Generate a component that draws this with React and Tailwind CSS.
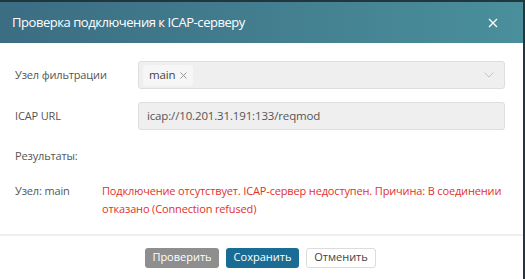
import React from 'react';

function App() {
  return (
    <div className="w-[525px] h-[279px] bg-[#22363d] pt-[2px] pr-[2px] overflow-hidden" style={{ fontFamily: '"Open Sans", sans-serif' }}>
      <div className="h-full bg-white flex flex-col">
        <div className="h-[41px] flex items-center justify-between pl-3 pr-[25px] bg-gradient-to-r from-[#3b6d83] to-[#4a8f9b]">
          <span className="text-white text-[13px] tracking-[-0.45px]">Проверка подключения к ICAP-серверу</span>
          <svg width="10" height="10" viewBox="0 0 10 10" className="text-white">
            <path d="M1 1L9 9M9 1L1 9" stroke="currentColor" strokeWidth="1.3" />
          </svg>
        </div>

        <div className="flex-1 px-[15px] pt-[18px] text-[11px] tracking-[-0.15px] text-[#555]">
          <div className="flex items-center">
            <div className="w-[123px]">Узел фильтрации</div>
            <div className="flex-1 h-[28px] mr-[3px] bg-[#efefef] border border-[#dedede] rounded-[3px] flex items-center justify-between pl-[4px] pr-[10px]">
              <div className="h-[21px] px-[6px] bg-[#f6f6f6] rounded-[3px] flex items-center gap-[5px] text-[#444] text-[11.5px]">
                main
                <svg width="7" height="7" viewBox="0 0 7 7">
                  <path d="M0.5 0.5L6.5 6.5M6.5 0.5L0.5 6.5" stroke="#9a9a9a" strokeWidth="1" />
                </svg>
              </div>
              <svg width="10" height="6" viewBox="0 0 10 6">
                <path d="M0.5 0.5L5 5L9.5 0.5" fill="none" stroke="#c4c4c4" strokeWidth="1" />
              </svg>
            </div>
          </div>

          <div className="flex items-center mt-[13px]">
            <div className="w-[123px]">ICAP URL</div>
            <div className="flex-1 h-[28px] mr-[3px] bg-[#efefef] border border-[#dedede] rounded-[3px] flex items-center pl-[8px] text-[#555] text-[11.5px]">
              icap://10.201.31.191:133/reqmod
            </div>
          </div>

          <div className="mt-[18px]">Результаты:</div>

          <div className="flex mt-[17px] leading-[18px]">
            <div className="w-[87px] shrink-0">Узел: main</div>
            <div className="text-[#e2302b] pr-[6px] tracking-[-0.15px]">
              Подключение отсутствует. ICAP-сервер недоступен. Причина: В соединении отказано (Connection refused)
            </div>
          </div>
        </div>

        <div className="h-[2px] bg-[#efefef]" />
        <div className="h-[43px] flex items-center justify-center gap-[7px] pr-[2px] text-[11px]">
          <button className="w-[74px] h-[20px] rounded-[3px] bg-[#8e8e8e] text-white">Проверить</button>
          <button className="w-[73px] h-[20px] rounded-[3px] bg-[#1b6c94] text-white">Сохранить</button>
          <button className="w-[70px] h-[20px] rounded-[3px] bg-white border border-[#dcdcdc] text-[#444]">Отменить</button>
        </div>
      </div>
    </div>
  );
}

export default App;
